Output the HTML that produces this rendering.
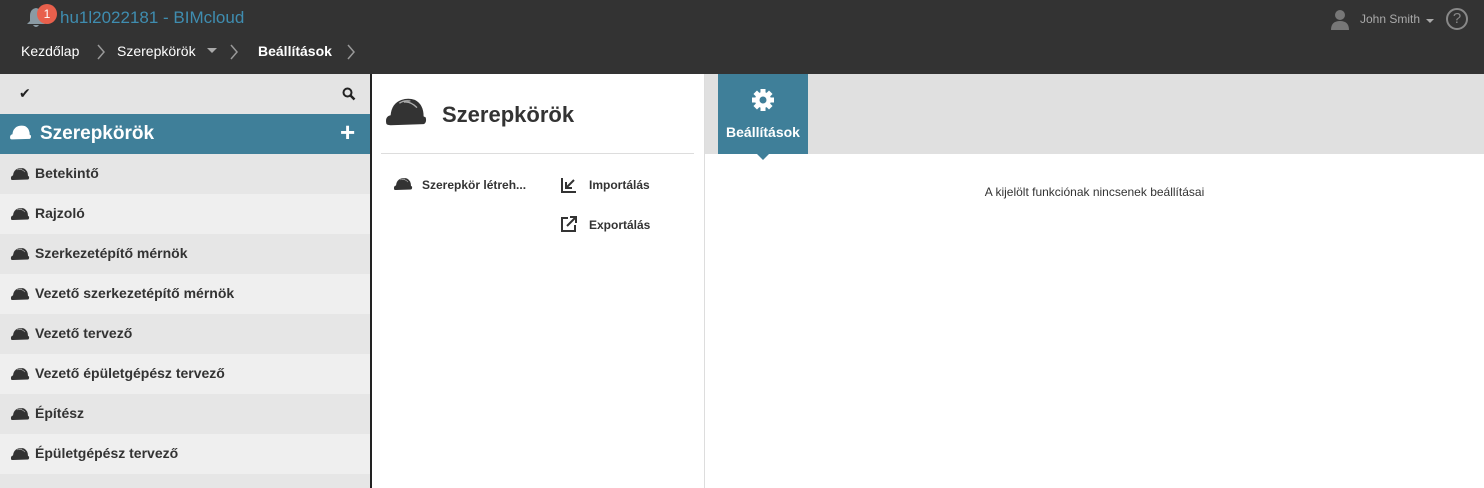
<!DOCTYPE html>
<html><head><meta charset="utf-8"><style>
*{margin:0;padding:0;box-sizing:border-box}
body{width:1484px;height:488px;overflow:hidden;background:#fff;font-family:"Liberation Sans","DejaVu Sans",sans-serif;position:relative;color:#333}
.a{position:absolute}
.top{left:0;top:0;width:1484px;height:74px;background:#333}
.b{font-weight:bold}
.row{position:absolute;left:0;width:370px;height:40px;font-size:14px;font-weight:bold;color:#333;line-height:38px;padding-left:35px}
.row svg{position:absolute;left:10px;top:13px}
</style></head><body>
<svg width="0" height="0" style="position:absolute"><defs>
<symbol id="hat" viewBox="0 0 40 28"><path d="M2 24 Q1 18 6 17 Q7 6 16 3 Q22 1 28 3 Q36 7 36 18 L38 19 Q39 24 36 25 L6 26 Q2 26 2 24Z" fill="currentColor"/><path d="M14 6 Q18 3 24 4 M18 5 Q24 4 30 10" stroke="#fff" stroke-width="1.2" fill="none" opacity=".6"/></symbol>
<symbol id="chev" viewBox="0 0 10 16"><path d="M2 1L8 8L2 15" stroke="#999" stroke-width="1.5" fill="none"/></symbol>
</defs></svg>
<div class="a top"></div>
<svg class="a" style="left:26px;top:7px" width="20" height="22" viewBox="0 0 20 22"><path d="M10 1 Q4 2 4 9 L4 14 L1 17 L19 17 L16 14 L16 9 Q16 2 10 1Z M7 18 Q10 22 13 18Z" fill="#8a9aa3"/></svg>
<div class="a" style="left:37px;top:4px;width:20px;height:20px;border-radius:50%;background:#e8604c;color:#fff;font-size:12px;text-align:center;line-height:20px">1</div>
<div class="a" style="left:60px;top:8px;font-size:17px;color:#3f8db0">hu1l2022181 - BIMcloud</div>
<div class="a" style="left:21px;top:43px;font-size:14px;color:#fff">Kezdőlap</div>
<svg class="a" style="left:96px;top:44px" width="10" height="16"><use href="#chev"/></svg>
<div class="a" style="left:117px;top:43px;font-size:14px;color:#fff">Szerepkörök</div>
<div class="a" style="left:207px;top:48px;width:0;height:0;border-left:5px solid transparent;border-right:5px solid transparent;border-top:5px solid #aaa"></div>
<svg class="a" style="left:229px;top:44px" width="10" height="16"><use href="#chev"/></svg>
<div class="a b" style="left:258px;top:43px;font-size:14px;color:#fff">Beállítások</div>
<svg class="a" style="left:346px;top:44px" width="10" height="16"><use href="#chev"/></svg>
<svg class="a" style="left:1331px;top:9px" width="18" height="21" viewBox="0 0 18 21"><circle cx="9" cy="6" r="5" fill="#777"/><path d="M0 21 Q0 12 9 12 Q18 12 18 21Z" fill="#777"/></svg>
<div class="a" style="left:1360px;top:12px;font-size:12px;color:#aaa">John Smith</div>
<div class="a" style="left:1426px;top:19px;width:0;height:0;border-left:4px solid transparent;border-right:4px solid transparent;border-top:4px solid #aaa"></div>
<div class="a" style="left:1446px;top:8px;width:22px;height:22px;border-radius:50%;border:2px solid #888;color:#888;font-size:15px;text-align:center;line-height:18px">?</div>

<div class="a" style="left:0;top:74px;width:370px;height:40px;background:#e4e4e4"></div>
<div class="a" style="left:19px;top:85px;font-size:14px;color:#222">✔</div>
<svg class="a" style="left:342px;top:87px" width="14" height="14" viewBox="0 0 14 14"><circle cx="5.5" cy="5.5" r="4" stroke="#222" stroke-width="2" fill="none"/><path d="M8.5 8.5L12.5 12.5" stroke="#222" stroke-width="2.5"/></svg>
<div class="a" style="left:0;top:114px;width:370px;height:40px;background:#3f7f99"></div>
<svg class="a" style="left:9px;top:124px;color:#fff" width="23" height="17"><use href="#hat"/></svg>
<div class="a b" style="left:40px;top:123px;font-size:19px;color:#fff">Szerepkörök</div>
<div class="a b" style="left:340px;top:117px;font-size:26px;color:#fff">+</div>

<div class="row" style="top:154px;background:#e6e6e6"><svg width="20" height="14" style="color:#333"><use href="#hat"/></svg>Betekintő</div>
<div class="row" style="top:194px;background:#efefef"><svg width="20" height="14" style="color:#333"><use href="#hat"/></svg>Rajzoló</div>
<div class="row" style="top:234px;background:#e6e6e6"><svg width="20" height="14" style="color:#333"><use href="#hat"/></svg>Szerkezetépítő mérnök</div>
<div class="row" style="top:274px;background:#efefef"><svg width="20" height="14" style="color:#333"><use href="#hat"/></svg>Vezető szerkezetépítő mérnök</div>
<div class="row" style="top:314px;background:#e6e6e6"><svg width="20" height="14" style="color:#333"><use href="#hat"/></svg>Vezető tervező</div>
<div class="row" style="top:354px;background:#efefef"><svg width="20" height="14" style="color:#333"><use href="#hat"/></svg>Vezető épületgépész tervező</div>
<div class="row" style="top:394px;background:#e6e6e6"><svg width="20" height="14" style="color:#333"><use href="#hat"/></svg>Építész</div>
<div class="row" style="top:434px;background:#efefef"><svg width="20" height="14" style="color:#333"><use href="#hat"/></svg>Épületgépész tervező</div>
<div class="a" style="left:0;top:474px;width:370px;height:14px;background:#e6e6e6"></div>
<div class="a" style="left:370px;top:74px;width:2px;height:414px;background:#222"></div>

<svg class="a" style="left:384px;top:96px;color:#333" width="44" height="32"><use href="#hat"/></svg>
<div class="a b" style="left:442px;top:102px;font-size:22px;color:#333">Szerepkörök</div>
<div class="a" style="left:381px;top:153px;width:313px;height:1px;background:#ddd"></div>
<svg class="a" style="left:393px;top:177px;color:#333" width="20" height="14"><use href="#hat"/></svg>
<div class="a b" style="left:422px;top:178px;font-size:12px">Szerepkör létreh...</div>
<svg class="a" style="left:561px;top:177px" width="16" height="16" viewBox="0 0 16 16"><path d="M1 1V15H15" stroke="#333" stroke-width="2" fill="none"/><path d="M13 3L6 10M5 5V11H11" stroke="#333" stroke-width="2" fill="none"/></svg>
<div class="a b" style="left:589px;top:178px;font-size:12px">Importálás</div>
<svg class="a" style="left:561px;top:216px" width="16" height="16" viewBox="0 0 16 16"><path d="M7 2H1V15H14V9" stroke="#333" stroke-width="2" fill="none"/><path d="M6 10L14 2M9 1H15V7" stroke="#333" stroke-width="2" fill="none"/></svg>
<div class="a b" style="left:589px;top:218px;font-size:12px">Exportálás</div>
<div class="a" style="left:704px;top:74px;width:1px;height:414px;background:#ddd"></div>

<div class="a" style="left:705px;top:74px;width:779px;height:80px;background:#e0e0e0"></div>
<div class="a" style="left:718px;top:74px;width:90px;height:80px;background:#3f7f99"></div>
<div class="a" style="left:757px;top:154px;width:0;height:0;border-left:6px solid transparent;border-right:6px solid transparent;border-top:6px solid #3f7f99"></div>
<svg class="a" style="left:751px;top:88px" width="24" height="24" viewBox="0 0 24 24"><g fill="#fff"><circle cx="12" cy="12" r="8"/><rect x="9.5" y="1" width="5" height="22"/><rect x="1" y="9.5" width="22" height="5"/><rect x="9.5" y="1" width="5" height="22" transform="rotate(45 12 12)"/><rect x="9.5" y="1" width="5" height="22" transform="rotate(-45 12 12)"/></g><circle cx="12" cy="12" r="3.5" fill="#3f7f99"/></svg>
<div class="a b" style="left:718px;top:124px;width:90px;text-align:center;font-size:14px;color:#fff">Beállítások</div>
<div class="a" style="left:705px;top:185px;width:779px;text-align:center;font-size:12px;color:#333">A kijelölt funkciónak nincsenek beállításai</div>
</body></html>
